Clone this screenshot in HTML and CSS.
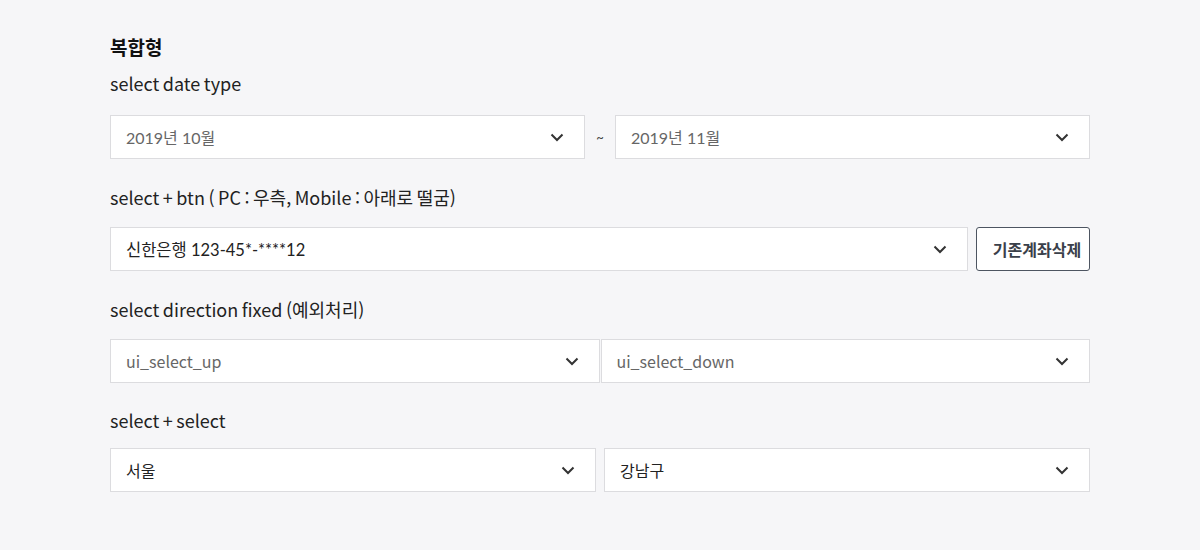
FILE: index.html
```html
<!DOCTYPE html>
<html lang="ko">
<head>
<meta charset="utf-8">
<title>복합형</title>
<link rel="stylesheet" href="styles.css">
</head>
<body>
<div class="page">
  <h2 class="title">복합형</h2>

  <section class="group first">
    <p class="label">select date type</p>
    <div class="row">
      <div class="select muted"><span>2019년 10월</span><svg class="chev" viewBox="0 0 14 9"><path d="M1.5 1.5 L7 7 L12.5 1.5"/></svg></div>
      <span class="tilde">~</span>
      <div class="select muted"><span>2019년 11월</span><svg class="chev" viewBox="0 0 14 9"><path d="M1.5 1.5 L7 7 L12.5 1.5"/></svg></div>
    </div>
  </section>

  <section class="group">
    <p class="label">select + btn ( PC : 우측, Mobile : 아래로 떨굼)</p>
    <div class="row gap">
      <div class="select acct"><span>신한은행 123-45*-****12</span><svg class="chev" viewBox="0 0 14 9"><path d="M1.5 1.5 L7 7 L12.5 1.5"/></svg></div>
      <button class="btn">기존계좌삭제</button>
    </div>
  </section>

  <section class="group">
    <p class="label">select direction fixed (예외처리)</p>
    <div class="row tight">
      <div class="select muted alt"><span>ui_select_up</span><svg class="chev" viewBox="0 0 14 9"><path d="M1.5 1.5 L7 7 L12.5 1.5"/></svg></div>
      <div class="select muted alt"><span>ui_select_down</span><svg class="chev" viewBox="0 0 14 9"><path d="M1.5 1.5 L7 7 L12.5 1.5"/></svg></div>
    </div>
  </section>

  <section class="group last">
    <p class="label">select + select</p>
    <div class="row gap">
      <div class="select alt"><span>서울</span><svg class="chev" viewBox="0 0 14 9"><path d="M1.5 1.5 L7 7 L12.5 1.5"/></svg></div>
      <div class="select alt"><span>강남구</span><svg class="chev" viewBox="0 0 14 9"><path d="M1.5 1.5 L7 7 L12.5 1.5"/></svg></div>
    </div>
  </section>
</div>
</body>
</html>
```

FILE: styles.css
```css
html, body {
  margin: 0;
  padding: 0;
}
body {
  background: #f6f6f8;
  font-family: Lato, "Noto Sans CJK KR", sans-serif;
  color: #222;
}
.page {
  width: 980px;
  margin-left: 110px;
  padding-top: 34px;
  height: 516px;
}
.title {
  margin: 0;
  font-family: "Noto Sans CJK KR", sans-serif;
  font-size: 19px;
  font-weight: 700;
  line-height: 26px;
  color: #111;
}
.group {
  margin-top: 26px;
}
.group.first {
  margin-top: 11px;
}
.group.first .label {
  margin-bottom: 20px;
}
.group.last {
  margin-top: 25px;
}
.group.last .label {
  margin-bottom: 16px;
}
.label {
  margin: 0 0 18px;
  font-family: "Noto Sans CJK KR", sans-serif;
  font-size: 18px;
  line-height: 24px;
  word-spacing: -1.5px;
  color: #222;
}
.row {
  display: flex;
  align-items: stretch;
  height: 44px;
}
.row.gap {
  gap: 8px;
}
.row.tight {
  gap: 1px;
}
.select {
  flex: 1;
  display: flex;
  align-items: center;
  justify-content: space-between;
  background: #fff;
  border: 1px solid #dcdcdf;
  padding: 0 20px 0 15px;
  font-size: 16px;
  color: #222;
  min-width: 0;
}
.select.muted {
  color: #666;
}
.select.acct {
  font-size: 16.5px;
}
.select.alt {
  font-family: "Noto Sans CJK KR", sans-serif;
  font-size: 16px;
}
.chev {
  width: 14px;
  height: 9px;
  flex: none;
}
.chev path {
  fill: none;
  stroke: #333;
  stroke-width: 2;
}
.tilde {
  width: 30px;
  flex: none;
  display: flex;
  align-items: center;
  justify-content: center;
  font-size: 13px;
  color: #444;
}
.btn {
  flex: none;
  width: 114px;
  background: #fff;
  border: 1px solid #4d5561;
  border-radius: 3px;
  font-family: "Noto Sans CJK KR", sans-serif;
  font-size: 16px;
  font-weight: 700;
  color: #3a404a;
  padding: 0 0 0 8px;
}
```
